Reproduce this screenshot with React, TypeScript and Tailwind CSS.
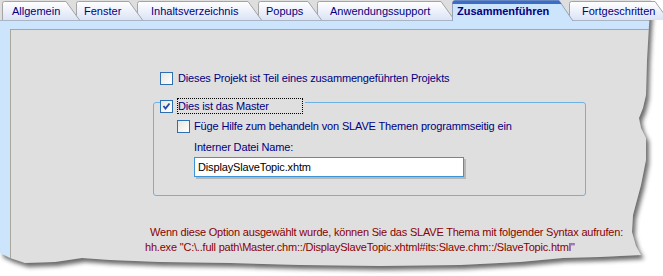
import React from 'react'

const tabs = [
  { label: 'Allgemein', w: 78, cls: 'w-[74px] pl-[10px] z-[7]' },
  { label: 'Fenster', w: 67, cls: 'w-[61px] pl-[8px] z-[6]' },
  { label: 'Inhaltsverzeichnis', w: 125, cls: 'w-[121px] pl-[14px] z-[5]' },
  { label: 'Popups', w: 64, cls: 'w-[59px] pl-[8px] z-[4]' },
  { label: 'Anwendungssupport', w: 138, cls: 'w-[135px] pl-[13px] z-[3]' },
  { label: 'Zusammenführen', w: 121, cls: 'w-[117px] pl-[5px] z-[10]', active: true },
  { label: 'Fortgeschritten', w: 100, cls: 'w-[94px] pl-[13px] z-[1]' },
]

// page edge is torn on the right and bottom
const edge =
  'M0 0 L651 0 L649 25 L647 60 L646 95 L643 108 L639 118 L641 128 L646 138 L646 160 L641 185 L637 200 L633 215 L632 232 L636 246 L641 255 L600 257 L563 258 L520 262 L460 265 L380 266 L300 265 L230 263 L160 262 L110 260 L82 258 L55 262 L25 263 L10 258 L0 253 Z'

function Tab({ label, w, cls, active, i }: { label: string; w: number; cls: string; active?: boolean; i: number }) {
  const s = 14
  return (
    <div className={`relative shrink-0 h-[20px] ${cls}`}>
      <svg className="absolute left-0 top-0 overflow-visible" width={w} height={21}>
        <defs>
          <linearGradient id={`tg${i}`} x1="0" y1="0" x2="0" y2="1">
            <stop offset="0" stopColor="#ffffff" />
            <stop offset="1" stopColor="#dbe3f5" />
          </linearGradient>
        </defs>
        {active ? (
          <>
            <path d={`M0.5 21 V3 Q0.5 0.5 3 0.5 H${w - s} L${w} 21 Z`} fill="#cde5fc" />
            <path d={`M0.5 21 V3 Q0.5 0.5 3 0.5 H${w - s} L${w} 21`} fill="none" stroke="#93a4bc" />
            <path d={`M0.5 4 V3 Q0.5 0.5 3 0.5 H${w - s} L${w - s + 2.5} 4 Z`} fill="#3a6cc8" />
          </>
        ) : (
          <path
            d={`M0.5 20 V3.5 Q0.5 1.5 2.5 1.5 H${w - s} L${w - 0.5} 20`}
            fill={`url(#tg${i})`}
            stroke="#a4a4a4"
          />
        )}
      </svg>
      <span
        className={`relative block pt-[5px] leading-[13px] whitespace-nowrap text-[#00007f] ${
          active ? 'font-bold' : ''
        }`}
      >
        {label}
      </span>
    </div>
  )
}

function Checkbox({ checked }: { checked?: boolean }) {
  return (
    <span className="relative block w-[13px] h-[13px] shrink-0 border border-[#2f6fb0] bg-gradient-to-br from-[#e6e6e0] to-white">
      {checked && (
        <svg className="absolute left-0 top-0" width="11" height="11" viewBox="0 0 11 11">
          <path d="M2.5 5 L4.5 7.5 L8.5 2.5" fill="none" stroke="#2546a8" strokeWidth="1.8" />
        </svg>
      )}
    </span>
  )
}

export default function App() {
  return (
    <div className="relative w-[663px] h-[276px] overflow-hidden bg-white font-['Liberation_Sans',Arial,sans-serif] text-[11px]">
      <div className="flex h-[20px] bg-[#dedede] pl-[2px]">
        {tabs.map((t, i) => (
          <Tab key={t.label} {...t} i={i} />
        ))}
      </div>

      <div className="h-[256px] bg-[#cde5fc] border-t border-[#a9b4c4] pt-[8px] pl-[10px]">
        <div className="h-full bg-[#dfdfdf] border border-[#a9a799] text-[#000080] leading-[13px] tracking-[-0.15px]">
          <div className="flex items-center gap-[5px] mt-[42px] ml-[149px]">
            <Checkbox />
            <span>Dieses Projekt ist Teil eines zusammengeführten Projekts</span>
          </div>

          <div className="relative mt-[17px] ml-[142px] w-[433px] h-[94px] border border-[#6cb2e4] rounded-[3px]">
            <div className="absolute -top-[5px] left-[6px] flex items-center gap-[4px] bg-[#dfdfdf] pr-[2px]">
              <Checkbox checked />
              <span className="block w-[126px] h-[16px] border border-dotted border-black leading-[14px]">
                Dies ist das Master
              </span>
            </div>

            <div className="flex items-center gap-[4px] mt-[17px] ml-[23px]">
              <Checkbox />
              <span>Füge Hilfe zum behandeln von SLAVE Themen programmseitig ein</span>
            </div>
            <div className="mt-[8px] ml-[40px]">Interner Datei Name:</div>
            <div className="mt-[3px] ml-[40px] w-[270px] h-[20px] border border-[#3c94d4] bg-white shadow-[2px_2px_0_#b7b7b7] pl-[3px] leading-[18px] text-black">
              DisplaySlaveTopic.xhtm
            </div>
          </div>

          <div className="mt-[29px] ml-[134px] leading-[15px] text-[#8b0000] whitespace-nowrap tracking-[-0.2px]">
            <div className="pl-[5px]">
              Wenn diese Option ausgewählt wurde, können Sie das SLAVE Thema mit folgender Syntax aufrufen:
            </div>
            <div>hh.exe "C:\..full path\Master.chm::/DisplaySlaveTopic.xhtml#its:Slave.chm::/SlaveTopic.html"</div>
          </div>
        </div>
      </div>

      <svg className="absolute inset-0 pointer-events-none" width="663" height="276">
        <defs>
          <clipPath id="outside">
            <path d={`M0 0 H663 V276 H0 Z ${edge}`} clipRule="evenodd" />
          </clipPath>
          <filter id="blur" x="-5%" y="-5%" width="110%" height="110%">
            <feGaussianBlur stdDeviation="2.2" />
          </filter>
        </defs>
        <g clipPath="url(#outside)">
          <rect width="663" height="276" fill="#ffffff" />
          <path d={edge} transform="translate(3 4)" fill="#3a3a3a" opacity="0.75" filter="url(#blur)" />
        </g>
      </svg>
    </div>
  )
}
